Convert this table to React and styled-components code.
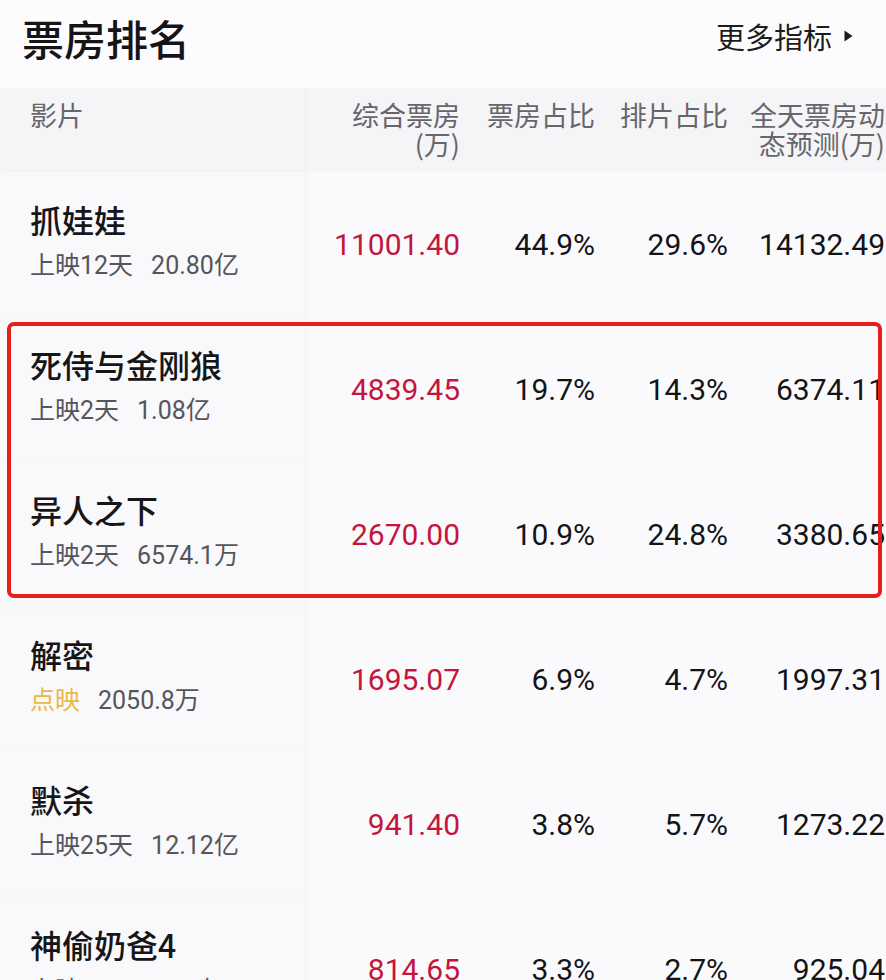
import React from "react";
import styled, { createGlobalStyle } from "styled-components";

const GlobalStyle = createGlobalStyle`
  html, body {
    margin: 0;
    padding: 0;
    background: #fafafc;
  }
  body {
    font-family: "Noto Sans CJK SC", "Noto Sans", sans-serif;
    color: #1b1b1f;
  }
`;

const movies = [
  { name: "抓娃娃", tag: "上映12天", total: "20.80亿", box: "11001.40", boxShare: "44.9%", showShare: "29.6%", forecast: "14132.49" },
  { name: "死侍与金刚狼", tag: "上映2天", total: "1.08亿", box: "4839.45", boxShare: "19.7%", showShare: "14.3%", forecast: "6374.11", mark: true },
  { name: "异人之下", tag: "上映2天", total: "6574.1万", box: "2670.00", boxShare: "10.9%", showShare: "24.8%", forecast: "3380.65", mark: true },
  { name: "解密", tag: "点映", preview: true, total: "2050.8万", box: "1695.07", boxShare: "6.9%", showShare: "4.7%", forecast: "1997.31" },
  { name: "默杀", tag: "上映25天", total: "12.12亿", box: "941.40", boxShare: "3.8%", showShare: "5.7%", forecast: "1273.22" },
  { name: "神偷奶爸4", tag: "上映12天", total: "3.46亿", box: "814.65", boxShare: "3.3%", showShare: "2.7%", forecast: "925.04" },
];

// column right edges: 460 / 595 / 728 / 885
const COLS = "305px 155px 135px 133px 157px";

const Page = styled.div`
  width: 886px;
  height: 980px;
  overflow: hidden;
  background: #fafafc;
`;

const TitleBar = styled.div`
  height: 88px;
  display: flex;
  align-items: center;
  justify-content: space-between;
  padding: 0 33px 0 22px;
  box-sizing: border-box;
  background: #fcfcfe;
`;

const Title = styled.h1`
  margin: 0;
  font-size: 42px;
  font-weight: 500;
  color: #151518;
  line-height: 1;
  margin-top: -12px;
`;

const MoreLink = styled.div`
  display: flex;
  align-items: center;
  gap: 12px;
  font-size: 29px;
  color: #1d1d20;
  margin-top: -16px;
`;

const HeadRow = styled.div`
  display: grid;
  grid-template-columns: ${COLS};
  height: 84px;
  background: #f5f5f7;
  color: #66666c;
  font-size: 27px;
  line-height: 29px;
`;

const HeadCell = styled.div`
  padding-top: 12px;
  text-align: ${(p) => (p.$left ? "left" : "right")};
  padding-left: ${(p) => (p.$left ? "30px" : "0")};
  white-space: nowrap;
  ${(p) => p.$left && "box-shadow: 2px 0 3px rgba(0,0,0,0.025);"}
`;

const Row = styled.div`
  display: grid;
  grid-template-columns: ${COLS};
  height: 145px;
  align-items: stretch;
`;

const NameCell = styled.div`
  display: flex;
  flex-direction: column;
  justify-content: center;
  padding-left: 30px;
  padding-bottom: 10px;
  background: #f9f9fb;
  box-shadow: 2px 0 3px rgba(0, 0, 0, 0.025);
`;

const Name = styled.div`
  font-size: 32px;
  line-height: 44px;
  font-weight: 500;
  color: #161619;
`;

const Sub = styled.div`
  margin-top: 9px;
  font-family: Roboto, "Noto Sans CJK SC", sans-serif;
  font-size: 25px;
  line-height: 32px;
  color: #55555b;
  white-space: nowrap;
`;

const Tag = styled.span`
  color: ${(p) => (p.$preview ? "#e8b84a" : "#55555b")};
  margin-right: 18px;
`;

const Value = styled.div`
  display: flex;
  align-items: center;
  justify-content: flex-end;
  font-family: Roboto, "Liberation Sans", sans-serif;
  font-size: 30px;
  color: ${(p) => (p.$red ? "#c4163d" : "#141417")};
  white-space: nowrap;
`;

const Marked = styled.div`
  position: relative;
  &::after {
    content: "";
    position: absolute;
    top: 5px;
    bottom: 9px;
    left: 7px;
    right: 4px;
    border: 4px solid #e3201e;
    border-radius: 7px;
    pointer-events: none;
  }
`;

const Arrow = () => (
  <svg width="9" height="12" viewBox="0 0 9 12">
    <path d="M0.5 0.5 L8.5 6 L0.5 11.5 Z" fill="#1d1d20" />
  </svg>
);

const MovieRow = ({ m }) => (
  <Row>
    <NameCell>
      <Name>{m.name}</Name>
      <Sub>
        <Tag $preview={m.preview}>{m.tag}</Tag>
        {m.total}
      </Sub>
    </NameCell>
    <Value $red>{m.box}</Value>
    <Value>{m.boxShare}</Value>
    <Value>{m.showShare}</Value>
    <Value>{m.forecast}</Value>
  </Row>
);

export default function App() {
  const marked = movies.filter((m) => m.mark);
  return (
    <Page>
      <GlobalStyle />
      <TitleBar>
        <Title>票房排名</Title>
        <MoreLink>
          更多指标 <Arrow />
        </MoreLink>
      </TitleBar>
      <HeadRow>
        <HeadCell $left>影片</HeadCell>
        <HeadCell>
          综合票房
          <br />
          (万)
        </HeadCell>
        <HeadCell>票房占比</HeadCell>
        <HeadCell>排片占比</HeadCell>
        <HeadCell>
          全天票房动
          <br />
          态预测(万)
        </HeadCell>
      </HeadRow>
      <MovieRow m={movies[0]} />
      <Marked>
        {marked.map((m) => (
          <MovieRow key={m.name} m={m} />
        ))}
      </Marked>
      {movies.slice(3).map((m) => (
        <MovieRow key={m.name} m={m} />
      ))}
    </Page>
  );
}
